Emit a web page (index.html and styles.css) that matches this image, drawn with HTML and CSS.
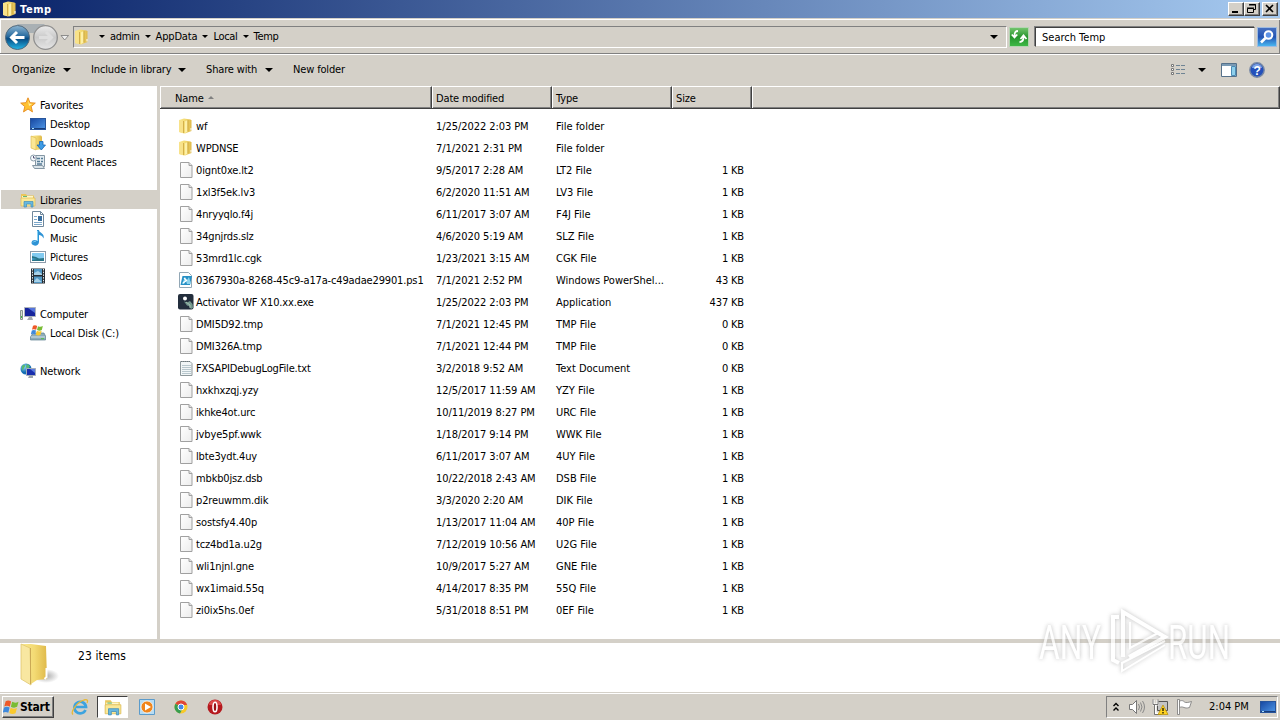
FILE: index.html
```
<!DOCTYPE html>
<html lang="en">
<head>
  <meta charset="UTF-8" />
  <meta name="viewport" content="width=device-width, initial-scale=1.0"/>
  <title>Temp</title>
  <link rel="stylesheet" href="styles.css">
</head>
<body>
  <!-- icons -->
  <svg class="defs" width="0" height="0">
    <defs>
      <linearGradient id="gold" x1="0" x2="1"><stop offset="0" stop-color="#fbe98f"/><stop offset=".5" stop-color="#f3da73"/><stop offset="1" stop-color="#dfb94a"/></linearGradient>
      <linearGradient id="screen" x1="0" x2="1" y2="1"><stop offset="0" stop-color="#1646a0"/><stop offset="1" stop-color="#4f98e8"/></linearGradient>
      <linearGradient id="paper" x1="0" x2="1" y2="1"><stop offset="0" stop-color="#fff"/><stop offset="1" stop-color="#ececec"/></linearGradient>
      <radialGradient id="globe" cx=".35" cy=".3"><stop offset="0" stop-color="#8ed6f4"/><stop offset="1" stop-color="#146eb4"/></radialGradient>
      <linearGradient id="back" y2="1" x2="0"><stop offset="0" stop-color="#8cb5d2"/><stop offset=".45" stop-color="#286b9f"/><stop offset=".55" stop-color="#074b83"/><stop offset="1" stop-color="#25b7e8"/></linearGradient>
      <linearGradient id="fwd" y2="1" x2="0"><stop offset="0" stop-color="#ebebeb"/><stop offset=".5" stop-color="#c9c9c9"/><stop offset="1" stop-color="#e6e6e6"/></linearGradient>
    </defs>
    <symbol id="folder" viewBox="0 0 16 16">
      <path d="M1 2 6 .500 12.500 1.500l1 1V13L7 15.500 1 14z" fill="url(#gold)"/>
      <path d="M1 2 6 3.500v12L1 14z" fill="#f8e28a"/>
      <path d="M5.500 3v12" stroke="#d3b04a"/>
      <path d="M7 3.500 9.500 2v11.500L7 15z" fill="#fdf0a8"/>
      <path d="M10 2v11.500" stroke="#c9a43b" stroke-width=".9"/>
      <path d="M13 10v2.500" stroke="#fff" fill="none"/>
    </symbol>
    <symbol id="file" viewBox="0 0 16 16">
      <path d="M2.500.500h8.500l3 3v12H2.500z" fill="url(#paper)" stroke="#a0a0a0"/>
      <path d="M11 .500v3h3" fill="#e2e2e2" stroke="#a0a0a0"/>
    </symbol>
    <symbol id="txt" viewBox="0 0 16 16">
      <path d="M2.500 1.500h9.500l2 2v12H2.500z" fill="#f1f6f7" stroke="#8d979a"/>
      <path d="M4 5.500h9M4 7.500h9M4 9.500h9M4 11.500h9M4 13.500h9" stroke="#b8c7cd"/>
      <path d="M3 1.500h10" stroke="#6c777b" stroke-dasharray="1 1"/>
    </symbol>
    <symbol id="ps1" viewBox="0 0 16 16">
      <path d="M1.500.5h9l3 3v12h-12z" fill="#fff" stroke="#92a7b5"/>
      <path d="M4.500 4H14l-2 9H2.500z" fill="#2790c5"/>
      <path d="M4 12 7 5l2 3 2-3 2 7H9L8 9l-2 3z" fill="#8dd4ee"/>
      <path d="m6 6 2.500 2.500L5 11" fill="none" stroke="#fff" stroke-width="1.200"/>
    </symbol>
    <symbol id="exe" viewBox="0 0 16 16">
      <rect x="0" y="0" width="15.500" height="15.500" rx="2" fill="#232e3d"/>
      <circle cx="7" cy="4.500" r="2" fill="#fff"/>
      <path d="m6 7.500 3 1 3-1.500 2.500 3 .500 4-2 1-2-3-2-.5z" fill="#72978d"/>
      <path d="m8 8 4 3v3" fill="none" stroke="#a5c0b0"/>
    </symbol>
    <symbol id="star" viewBox="0 0 16 16">
      <path d="m8 .8 2 4.900 5.300.4-4.100 3.500 1.300 5.300L8 12l-4.500 2.900 1.300-5.300L.7 6.100 6 5.700z" fill="#ffc12f" stroke="#e58a1d" stroke-width=".9"/>
      <path d="m8 3 1.200 3.500 3 .4L9 9z" fill="#fff0a0"/>
    </symbol>
    <symbol id="desktop" viewBox="0 0 16 16">
      <rect x=".5" y="2.500" width="15" height="11" fill="url(#screen)" stroke="#27549b"/>
      <path d="M1 12.500h14" stroke="#183c78"/><path d="M2 12.500h2" stroke="#a9e2ff"/>
    </symbol>
    <symbol id="downloads" viewBox="0 0 16 16">
      <path d="M1 1 6 .5h5l1 1V14l-6 1-5-2z" fill="url(#gold)"/>
      <path d="m1 1 5 2v12l-5-2z" fill="#fbe794" stroke="#d9b64e" stroke-width=".6"/>
      <path d="M9.500 6.500h3.500V10h2.500l-4.200 5L7 10h2.500z" fill="#3d9be5" stroke="#1668b5" stroke-width=".8"/>
    </symbol>
    <symbol id="recent" viewBox="0 0 16 16">
      <path d="M5.500 1.500h9v11h-9z" fill="#e2ebf1" stroke="#8496a3"/>
      <path d="M7 4.500h3m1 0h2M7 7.500h3m1 0h2M7 10h5" stroke="#557b95" stroke-width="1.500"/>
      <path d="M2.500 11.500h10l2 3h-10z" fill="#dce5ea" stroke="#8496a3"/>
      <circle cx="3.500" cy="4" r="3" fill="#f7fbff" stroke="#8b9da9"/><path d="M3.500 2v2h2" fill="none" stroke="#557"/>
    </symbol>
    <symbol id="libraries" viewBox="0 0 16 16">
      <path d="M1 2h5l1 1.500h7V13H1z" fill="#e9c75b"/>
      <path d="M2 4h11v2H2z" fill="#fff6c8"/><path d="M3 4.500h4" stroke="#65b978"/>
      <path d="M1 6h14v8H1z" fill="#fae897" stroke="#dcba55" stroke-width=".7"/>
      <path d="M4 15V9.500h9V15h-2v-3H6.500v3z" fill="#69b8df" stroke="#418eb9" stroke-width=".7"/>
    </symbol>
    <symbol id="documents" viewBox="0 0 16 16">
      <path d="M2.500.5h8l3 3v12h-11z" fill="#fff" stroke="#70889c"/>
      <path d="M10.500.5v3h3" fill="none" stroke="#70889c"/>
      <path d="M4 5.500h3M4 8.500h3M4 11.500h8M4 13.500h8" stroke="#7ba7ca"/><path d="M8 5h4v5H8z" fill="#376d9f"/>
    </symbol>
    <symbol id="music" viewBox="0 0 16 16">
      <path d="M7 0h2c0 3 6 3 4.500 8.500-1-3-3-3.500-4.500-3.500v7c0 5-8 4.500-7.500.5C2 9.500 5 9.500 7 10.500z" fill="#2e93d5"/>
      <path d="M7.500 1v10M3 12.500c1-2 3-1 3-1" fill="none" stroke="#86d2f5"/>
    </symbol>
    <symbol id="pictures" viewBox="0 0 16 16">
      <rect x=".5" y="2.500" width="15" height="11" fill="#fff" stroke="#8d9baa"/>
      <path d="M2 4h12v8H2z" fill="#82caf0"/><path d="m2 7 4 1 3 1.500 5-.5v3H2z" fill="#287487"/><path d="m2 9 5 1-5 1z" fill="#42a0d0"/>
    </symbol>
    <symbol id="videos" viewBox="0 0 16 16">
      <path d="M1 .5h14v15H1z" fill="#252d34"/><path d="M4 1h8v6H4zm0 7.500h8V15H4z" fill="#5198c5"/>
      <path d="M2.500 1v14M13.500 1v14" stroke="#e4eaed" stroke-dasharray="1.500 1.200"/>
      <path d="m4 5 4-2 4 3v1H4zm0 8 3-3 5 4H4z" fill="#a7d1e8"/>
    </symbol>
    <symbol id="computer" viewBox="0 0 16 16">
      <path d="M4.500 1.500h11v9h-11z" fill="#17259d" stroke="#aeb4bd"/><path d="m8 2 7 0v5z" fill="#5574dc"/>
      <path d="M9 11h3l1 3H7z" fill="#a6abb1"/><path d="M.5 4.500h2v9h-2z" fill="#d7e2d2" stroke="#8b9791"/><path d="M1.500 10v2" stroke="#45b643"/>
    </symbol>
    <symbol id="winflag" viewBox="0 0 16 16">
      <path d="M2.500 2.200C4.500 1 6 1.500 7.600 2.400L6.400 7.200C4.800 6.300 3.200 6 1.200 7z" fill="#ee5928"/>
      <path d="M8.600 2.700c2 1.100 4 1 6-.2l-1.300 4.900c-2 1.100-4 1-5.900-.1z" fill="#79bc35"/>
      <path d="M1 8c2-1 3.600-.8 5.200.1L5 12.900C3.400 12 1.700 11.700-.3 13z" fill="#3e89dc"/>
      <path d="M7.200 8.300c2 1.100 4 1.200 5.900.1l-1.300 4.900c-2 1.100-4 1-5.900-.1z" fill="#f9c92e"/>
    </symbol>
    <symbol id="disk" viewBox="0 0 16 16">
      <path d="M2 9.500 4 8h10l1.500 3v4H.5v-3z" fill="#8eabb9" stroke="#5d7f8f" stroke-width=".7"/><path d="M1 12h14" stroke="#d0e1e8"/><path d="M11 13.700h3" stroke="#51c247"/>
      <svg x="1" y="-1" width="13" height="13"><use href="#winflag"/></svg>
    </symbol>
    <symbol id="network" viewBox="0 0 16 16">
      <circle cx="6" cy="6" r="5.500" fill="url(#globe)"/><path d="M2 3c3-3 4 0 2 2L2 8zm5-2 3 2-2 3-2-2z" fill="#58b970"/>
      <path d="M6.500 5.500h9v7h-9z" fill="#192fae" stroke="#a4adb8"/><path d="m10 6 5 0v4z" fill="#5a7ce0"/><path d="M9 13h4v2H8z" fill="#9ea6ae"/>
    </symbol>
  </svg>

  <div class="titlebar">
    <svg class="icon"><use href="#folder"/></svg>
    <span class="caption">Temp</span>
    <div class="win-btns">
      <b class="win-btn"><svg width="14" height="12"><path d="M3 8h6v2H3z"/></svg></b>
      <b class="win-btn"><svg width="14" height="12"><path d="M4.500 2v-.5h6v5H9M4 2h7M2.500 5.500h6v4h-6zM2 5h7" fill="none" stroke="#000"/></svg></b>
      <b class="win-btn close"><svg width="14" height="12"><path d="m3 2 7 7M10 2 3 9" stroke="#000" stroke-width="1.600"/></svg></b>
    </div>
  </div>

  <div class="navbar">
    <svg class="travel" width="70" height="30" viewBox="0 0 70 30">
      <path d="M17 2h28c-4 3-4 6-4 9H20z" fill="#a9b0b4"/>
      <circle cx="17.500" cy="15.500" r="12" fill="url(#back)" stroke="#52697b"/>
      <path d="m17 10-5.500 5.500L17 21M12 15.500h12.500" fill="none" stroke="#fff" stroke-width="3"/>
      <circle cx="45.500" cy="15.500" r="11.800" fill="url(#fwd)" stroke="#8f8f8f" stroke-width="1.300"/>
      <path d="m46 10 5.500 5.500L46 21M51 15.500H39" fill="none" stroke="#dedede" stroke-width="3"/>
      <path d="M61 13.500h7.500L64.700 18z" fill="#eee" stroke="#777" stroke-width=".8"/>
    </svg>
    <div class="address">
      <svg class="icon"><use href="#folder"/></svg>
      <i class="tri"></i><span>admin</span>
      <i class="tri"></i><span class="appdata">AppData</span>
      <i class="tri"></i><span>Local</span>
      <i class="tri"></i><span>Temp</span>
      <i class="tri drop"></i>
    </div>
    <div class="refresh">
      <svg width="18" height="18" viewBox="0 0 18 18"><path d="M8 3C5 3 4.500 5 4.500 8M1.800 6.500l2.700 3 2.700-3M9.500 14c3 0 4-2 4-5m-3 2 3-3.500 3 3.500" fill="none" stroke="#fff" stroke-width="1.800"/></svg>
    </div>
    <div class="search">Search Temp</div>
    <div class="search-btn">
      <svg width="18" height="18" viewBox="0 0 18 18"><circle cx="10.500" cy="7" r="3.800" fill="#5d92e5" stroke="#fff" stroke-width="2"/><path d="m7.500 10-4.500 4.500" stroke="#fff" stroke-width="2.600"/></svg>
    </div>
  </div>

  <div class="toolbar">
    <span class="organize">Organize</span><i class="tri big"></i>
    <span class="include">Include in library</span><i class="tri big"></i>
    <span class="share">Share with</span><i class="tri big"></i>
    <span class="newfolder">New folder</span>
    <div class="tools">
      <svg width="16" height="14"><path d="M1.500 1.500h2v2h-2zM1.500 5.500h2v2h-2zM1.500 9.500h2v2h-2z" fill="#fff" stroke="#777"/><path d="M6 2.500h4m1 0h4M6 6.500h4m1 0h4M6 10.500h4m1 0h4" stroke="#6f8494"/></svg>
      <i class="tri big"></i>
      <svg class="pane" width="16" height="14"><path d="M.5.500h15v13H.5z" fill="#fff" stroke="#56718a"/><path d="M1 2h14" stroke="#7a9ab4" stroke-width="2"/><path d="M10.500 3.500h4v9h-4z" fill="#8fd0ec" stroke="#4b8bb5"/></svg>
      <svg width="16" height="16" viewBox="0 0 16 16"><circle cx="8" cy="8" r="7.200" fill="#2450ba" stroke="#7788a5" stroke-width="1.400"/><path d="M3 6a5 4 0 0 1 10 0" fill="#7fa3e6"/><text class="q" x="8" y="12.500" text-anchor="middle">?</text></svg>
    </div>
  </div>

  <div class="main">
    <div class="nav" id="nav"></div>
    <div class="content">
      <div class="header">
        <div class="col c-name">Name <i class="sort"></i></div>
        <div class="col c-date">Date modified</div>
        <div class="col c-type">Type</div>
        <div class="col c-size">Size</div>
        <div class="col c-rest"></div>
      </div>
      <div class="files" id="files"></div>
    </div>
  </div>

  <div class="details">
    <svg width="40" height="44" viewBox="0 0 40 44">
      <defs><radialGradient id="shade"><stop offset="0" stop-color="#aaa"/><stop offset="1" stop-color="#fff"/></radialGradient></defs>
      <ellipse cx="26" cy="33" rx="13" ry="7" fill="url(#shade)"/>
      <path d="M2 1h9l15 2 1 33-10 1-6 4z" fill="url(#gold)"/>
      <path d="m1 1 9 4 1 37-10-6z" fill="#f8e7a1" stroke="#e0c670" stroke-width=".8"/>
      <path d="M10.500 5v36" stroke="#cba955"/>
      <path d="M26.500 25v9l-2 2" fill="none" stroke="#fff" stroke-width="2"/>
    </svg>
    <span>23 items</span>
  </div>

  <div class="taskbar">
    <div class="start"><svg width="17" height="17" viewBox="0 0 16 16"><use href="#winflag"/></svg>Start</div>
    <svg class="ie" width="18" height="18" viewBox="0 0 18 18"><path d="M14.500 12A5.800 5.800 0 1 1 15 9H5" fill="none" stroke="#3ca3df" stroke-width="2.700"/><path d="M2 16.500C-1 14 6 4 13 2c4-1 4 1 3 3" fill="none" stroke="#e8b834" stroke-width="1.300"/></svg>
    <div class="task-active"><svg width="18" height="18"><use href="#libraries"/></svg></div>
    <svg class="wmp" width="16" height="16" viewBox="0 0 16 16"><path d="M.5.500h15v15H.5z" fill="#b7dcf3" stroke="#5b9bcb"/><circle cx="8" cy="8" r="6" fill="#f0851c" stroke="#fff" stroke-width=".7"/><path d="m6 4.500 6 3.500-6 3.500z" fill="#fff"/></svg>
    <svg class="chrome" width="14" height="14" viewBox="0 0 14 14"><circle cx="7" cy="7" r="6.500" fill="#f7c928"/><path d="M7 7 1.400 3.700A6.500 6.500 0 0 1 12.600 3.700L13 5H7z" fill="#df4638"/><path d="M1.400 3.700 7 7l1.500 2L6 13.500A6.500 6.500 0 0 1 1.400 3.700z" fill="#389d50"/><circle cx="7" cy="7" r="3" fill="#4288e9" stroke="#fff"/></svg>
    <svg class="opera" width="16" height="16" viewBox="0 0 16 16"><circle cx="8" cy="8" r="7.500" fill="#b5191e"/><path d="M2 6a6 5 0 0 1 12 0" fill="#dc4a4a"/><ellipse cx="8" cy="8" rx="2" ry="4.800" fill="#9b1014" stroke="#fff" stroke-width="1.600"/></svg>
    <div class="tray">
      <svg width="8" height="10" viewBox="0 0 8 10"><path d="m1.500 4 2.500-2.500L6.500 4M1.500 8.500 4 6l2.500 2.500" fill="none" stroke="#000" stroke-width="1.400"/></svg>
      <svg class="vol" width="18" height="16" viewBox="0 0 18 16"><path d="M1.500 5.500h3l4-4v13l-4-4h-3z" fill="#fff" stroke="#777"/><path d="M10.500 5q2 3 0 6M12.500 3.500q3 4.500 0 9M14.500 2q4 6 0 12" fill="none" stroke="#888"/></svg>
      <svg class="net" width="17" height="17" viewBox="0 0 17 17"><path d="M5.500 2.500h10v9h-10z" fill="#c4c4c4" stroke="#555"/><path d="M1.500 1v4.500h4V1M3.500 5v9.500h6" fill="none" stroke="#fff" stroke-width="2"/><path d="M1 .5v5h5v-5M2.500 6v9.500h7" fill="none" stroke="#555" stroke-width=".8"/><path d="m11 6 5 9.500H6z" fill="#ffd320" stroke="#b68d00" stroke-width=".7"/><path d="M11 9v3m0 1v1.500" stroke="#000" stroke-width="1.200"/></svg>
      <svg class="flag" width="17" height="16" viewBox="0 0 17 16"><path d="M1.500.5h2v15h-2z" fill="#fff" stroke="#777" stroke-width=".8"/><path d="M3.500 2c3-1 4 0 5 1s4 .5 7-.5l-2 6c-3 .8-4 .5-5.500 0s-2.500-1-4.500 0z" fill="#fff" stroke="#777" stroke-width=".8"/></svg>
      <span class="clock">2:04 PM</span>
      <svg width="16" height="16"><use href="#desktop"/></svg>
    </div>
  </div>

  <svg class="watermark" width="210" height="76" viewBox="0 0 210 76">
    <text x="3" y="54" textLength="62" lengthAdjust="spacingAndGlyphs">ANY</text>
    <path d="M83 12h-6v43l6 3M87 52V7l42 25-36 20"/>
    <path class="thin" d="M94 17v26l28-15M86 57v9l43-26M86 58l43-22"/>
    <text x="132" y="54" textLength="62" lengthAdjust="spacingAndGlyphs">RUN</text>
  </svg>

  <script>
    const navItems = [
      ['star', 'Favorites', 0], ['desktop', 'Desktop', 1], ['downloads', 'Downloads', 1], ['recent', 'Recent Places', 1],
      null,
      ['libraries', 'Libraries', 0], ['documents', 'Documents', 1], ['music', 'Music', 1], ['pictures', 'Pictures', 1], ['videos', 'Videos', 1],
      null,
      ['computer', 'Computer', 0], ['disk', 'Local Disk (C:)', 1],
      null,
      ['network', 'Network', 0]
    ];

    const files = [
      ['folder', 'wf', '1/25/2022 2:03 PM', 'File folder', ''],
      ['folder', 'WPDNSE', '7/1/2021 2:31 PM', 'File folder', ''],
      ['file', '0ignt0xe.lt2', '9/5/2017 2:28 AM', 'LT2 File', '1 KB'],
      ['file', '1xl3f5ek.lv3', '6/2/2020 11:51 AM', 'LV3 File', '1 KB'],
      ['file', '4nryyqlo.f4j', '6/11/2017 3:07 AM', 'F4J File', '1 KB'],
      ['file', '34gnjrds.slz', '4/6/2020 5:19 AM', 'SLZ File', '1 KB'],
      ['file', '53mrd1lc.cgk', '1/23/2021 3:15 AM', 'CGK File', '1 KB'],
      ['ps1', '0367930a-8268-45c9-a17a-c49adae29901.ps1', '7/1/2021 2:52 PM', 'Windows PowerShel...', '43 KB'],
      ['exe', 'Activator WF X10.xx.exe', '1/25/2022 2:03 PM', 'Application', '437 KB'],
      ['file', 'DMI5D92.tmp', '7/1/2021 12:45 PM', 'TMP File', '0 KB'],
      ['file', 'DMI326A.tmp', '7/1/2021 12:44 PM', 'TMP File', '0 KB'],
      ['txt', 'FXSAPIDebugLogFile.txt', '3/2/2018 9:52 AM', 'Text Document', '0 KB'],
      ['file', 'hxkhxzqj.yzy', '12/5/2017 11:59 AM', 'YZY File', '1 KB'],
      ['file', 'ikhke4ot.urc', '10/11/2019 8:27 PM', 'URC File', '1 KB'],
      ['file', 'jvbye5pf.wwk', '1/18/2017 9:14 PM', 'WWK File', '1 KB'],
      ['file', 'lbte3ydt.4uy', '6/11/2017 3:07 AM', '4UY File', '1 KB'],
      ['file', 'mbkb0jsz.dsb', '10/22/2018 2:43 AM', 'DSB File', '1 KB'],
      ['file', 'p2reuwmm.dik', '3/3/2020 2:20 AM', 'DIK File', '1 KB'],
      ['file', 'sostsfy4.40p', '1/13/2017 11:04 AM', '40P File', '1 KB'],
      ['file', 'tcz4bd1a.u2g', '7/12/2019 10:56 AM', 'U2G File', '1 KB'],
      ['file', 'wli1njnl.gne', '10/9/2017 5:27 AM', 'GNE File', '1 KB'],
      ['file', 'wx1imaid.55q', '4/14/2017 8:35 PM', '55Q File', '1 KB'],
      ['file', 'zi0ix5hs.0ef', '5/31/2018 8:51 PM', '0EF File', '1 KB']
    ];

    const icon = name => `<svg class="icon"><use href="#${name}"/></svg>`;

    document.getElementById('nav').innerHTML = navItems.map(item => {
      if (!item) return '<div class="nav-gap"></div>';
      const [ico, label, level] = item;
      const cls = 'nav-item' + (level ? ' child' : '') + (label === 'Libraries' ? ' selected' : '');
      return `<div class="${cls}">${icon(ico)}<span>${label}</span></div>`;
    }).join('');

    document.getElementById('files').innerHTML = files.map(([ico, name, date, type, size]) => `
      <div class="file">
        <div class="f-name">${icon(ico)}<span>${name}</span></div>
        <div class="f-date">${date}</div>
        <div class="f-type">${type}</div>
        <div class="f-size">${size}</div>
      </div>`).join('');
  </script>
</body>
</html>
```
FILE: styles.css
```
* {
  box-sizing: border-box;
}

body {
  margin: 0;
  width: 1280px;
  height: 720px;
  overflow: hidden;
  display: flex;
  flex-direction: column;
  background: #d4d0c8;
  color: #000;
  font-family: "DejaVu Sans Condensed", "DejaVu Sans", sans-serif;
  font-stretch: condensed;
  font-size: 11px;
  letter-spacing: -0.15px;
  line-height: 14px;
  white-space: nowrap;
}

svg {
  display: block;
  flex: none;
}

.defs {
  position: absolute;
}

.icon {
  width: 16px;
  height: 16px;
}

.tri {
  border: 3px solid transparent;
  border-top-color: #000;
  border-bottom: 0;
}

.tri.big {
  border-width: 4px 4px 0;
}

/* title bar */
.titlebar {
  height: 18px;
  flex: none;
  display: flex;
  align-items: center;
  padding: 0 2px;
  background: linear-gradient(90deg, #0a246a, #a6caf0);
}

.caption {
  margin: 1px 0 0 2px;
  color: #fff;
  font-weight: bold;
  letter-spacing: 0.6px;
}

.win-btns {
  display: flex;
  margin-left: auto;
}

.win-btn {
  width: 16px;
  height: 14px;
  background: #d4d0c8;
  border: 1px solid;
  border-color: #fff #404040 #404040 #fff;
  box-shadow: inset -1px -1px #808080;
}

.win-btn.close {
  margin-left: 2px;
}

/* address row */
.navbar {
  height: 36px;
  flex: none;
  display: flex;
  align-items: center;
  border-top: 1px solid #d4d0c8;
  border-bottom: 1px solid #808080;
  box-shadow: inset 0 1px #fff, inset 1px 0 #fff, inset -1px 0 #808080;
  padding-top: 1px;
}

.travel {
  margin-right: 3px;
}

.address {
  width: 934px;
  height: 22px;
  display: flex;
  align-items: center;
  border: 1px solid;
  border-color: #808080 #fff #fff #808080;
  letter-spacing: -0.3px;
}

.address .tri {
  margin: 0 5px 0 9px;
}

.address span + .tri {
  margin: 0 5px 0 5px;
}

.address .appdata {
  letter-spacing: -0.15px;
}

.address .tri.drop {
  margin: 0 8px 0 auto;
  border-width: 4px 4px 0;
}

.refresh {
  width: 20px;
  height: 20px;
  margin-left: 2px;
  border: 1px solid #b4d5b2;
  background: linear-gradient(#72c46c, #27942e 50%, #3eb846);
}

.search {
  width: 220px;
  height: 20px;
  margin-left: 6px;
  padding: 3px 6px;
  background: #fff;
  border: 1px solid;
  border-color: #404040 #d4d0c8 #d4d0c8 #404040;
  box-shadow: -1px -1px #808080;
  letter-spacing: 0;
}

.search-btn {
  width: 20px;
  height: 20px;
  margin-left: 2px;
  border: 1px solid #9ebbe0;
  background: linear-gradient(#456fbf, #2354b4 50%, #49b5ef);
}

/* command bar */
.toolbar {
  height: 32px;
  flex: none;
  display: flex;
  align-items: center;
  padding: 0 0 1px 12px;
  border-top: 1px solid #fff;
}

.organize { width: 51px; }
.include { width: 87px; margin-left: 20px; }
.share { width: 59px; margin-left: 20px; }
.newfolder { margin-left: 20px; }

.tools {
  margin-left: auto;
  margin-right: 15px;
  display: flex;
  align-items: center;
}

.tools .tri {
  margin: 0 15px 0 12px;
}

.tools .pane {
  margin-right: 12px;
}

.q {
  font: bold 12px "Liberation Sans", sans-serif;
  fill: #fff;
}

/* panes */
.main {
  height: 553px;
  flex: none;
  display: flex;
}

.nav {
  width: 160px;
  padding-top: 9px;
  background: #fff;
  border-right: 3px solid #d4d0c8;
}

.nav-item {
  height: 19px;
  display: flex;
  align-items: center;
  gap: 4px;
  padding-left: 20px;
}

.nav-item span {
  position: relative;
  top: 1px;
}

.nav-item.child {
  padding-left: 30px;
}

.nav-item.selected {
  margin-left: 1px;
  padding-left: 19px;
  background: #d4d0c8;
}

.nav-gap {
  height: 19px;
}

.content {
  flex: 1;
  background: #fff;
}

.header {
  height: 23px;
  display: flex;
  border-bottom: 1px solid #404040;
  background: #d4d0c8;
}

.col {
  padding: 5px 3px 0;
  border-top: 1px solid #fff;
  border-left: 1px solid #fff;
  border-right: 1px solid #404040;
  box-shadow: inset -1px -1px #808080;
}

.c-name { width: 272px; padding-left: 14px; }
.c-date { width: 120px; }
.c-type { width: 120px; }
.c-size { width: 80px; }
.c-rest { flex: 1; }

.sort {
  display: inline-block;
  margin-left: 1px;
  vertical-align: 3px;
  border: 3px solid transparent;
  border-bottom-color: #808080;
  border-top: 0;
}

.files {
  padding-top: 7px;
}

.file {
  height: 22px;
  display: flex;
  align-items: center;
}

.f-name {
  width: 276px;
  padding-left: 18px;
  display: flex;
  align-items: center;
  gap: 2px;
}

.f-name .icon {
  position: relative;
  top: -1px;
}

.f-date { width: 120px; letter-spacing: -0.07px; }
.f-type { width: 120px; letter-spacing: 0; }
.f-size { width: 68px; text-align: right; }

/* details pane */
.details {
  height: 53px;
  flex: none;
  display: flex;
  padding-left: 20px;
  background: #fff;
  border-top: 4px solid #d4d0c8;
  font-size: 12px;
  letter-spacing: 0.1px;
}

.details span {
  margin: 6px 0 0 18px;
}

/* taskbar */
.taskbar {
  height: 28px;
  flex: none;
  display: flex;
  align-items: center;
  padding: 1px 2px 0;
  border-top: 1px solid #d4d0c8;
  box-shadow: inset 0 1px #fff;
}

.start {
  width: 52px;
  height: 22px;
  display: flex;
  align-items: center;
  font-size: 12px;
  font-weight: bold;
  letter-spacing: -0.2px;
  border: 1px solid;
  border-color: #fff #404040 #404040 #fff;
  box-shadow: inset -1px -1px #808080;
}

.ie { margin-left: 17px; }

.task-active {
  width: 31px;
  height: 22px;
  margin-left: 8px;
  padding: 1px 6px;
  background: #fff;
  border: 1px solid;
  border-color: #404040 #fff #fff #404040;
}

.wmp { margin-left: 11px; }
.chrome { margin-left: 19px; }
.opera { margin-left: 19px; }

.tray {
  width: 172px;
  height: 22px;
  margin-left: auto;
  padding: 0 1px 0 5px;
  display: flex;
  align-items: center;
  border: 1px solid;
  border-color: #808080 #fff #fff #808080;
}

.vol { margin-left: 8px; }
.net { margin-left: 6px; }
.flag { margin-left: 7px; }
.clock { margin: 0 auto 0 16px; letter-spacing: 0; }

.watermark {
  position: absolute;
  left: 1036px;
  top: 605px;
  opacity: 0.75;
  filter: drop-shadow(0 0 2px #aaa);
}

.watermark text {
  font: 49px Roboto, sans-serif;
  letter-spacing: 0;
  fill: #fff;
}

.watermark path {
  fill: none;
  stroke: #fff;
  stroke-width: 4;
}

.watermark .thin {
  stroke-width: 2;
}
```
